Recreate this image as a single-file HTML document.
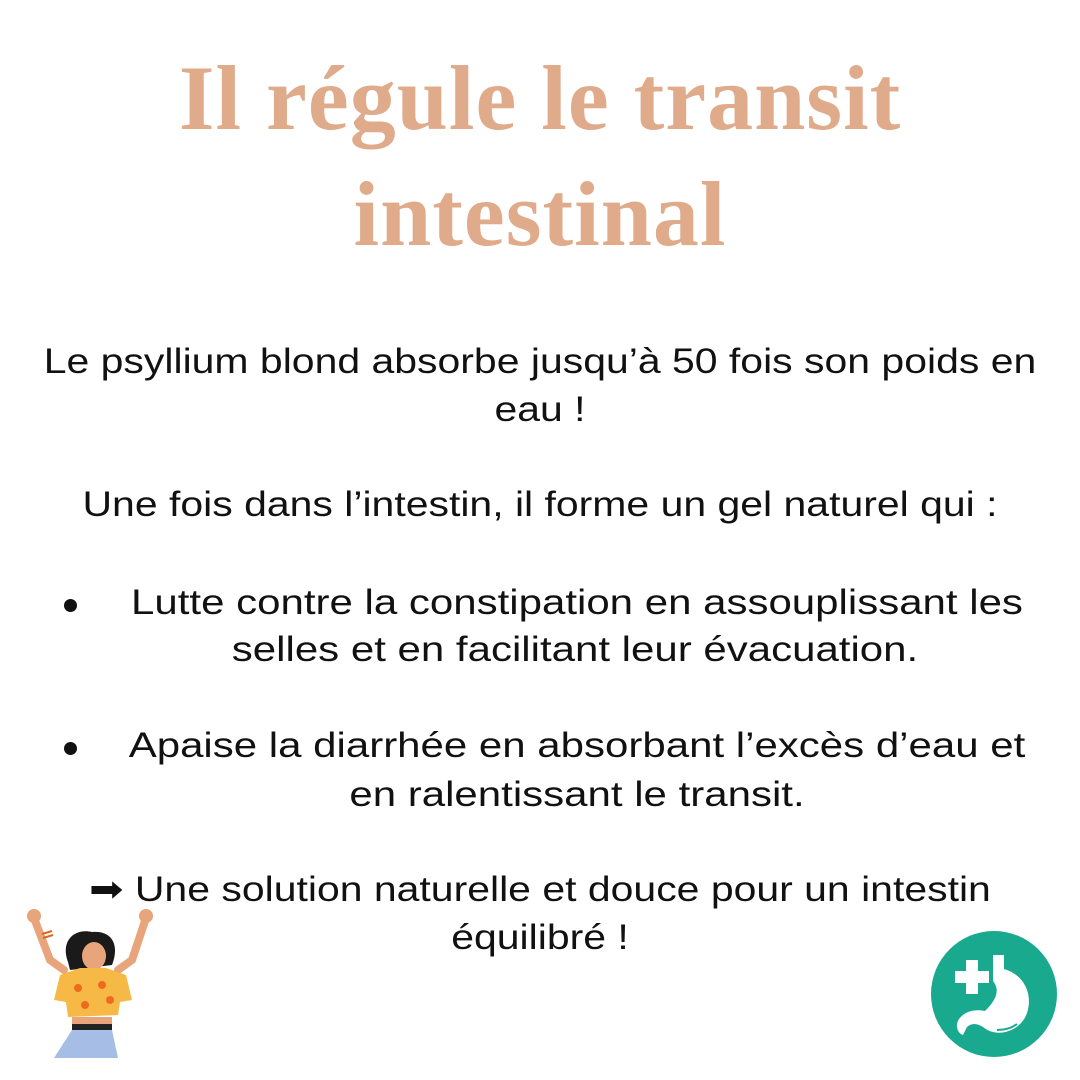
<!DOCTYPE html>
<html><head><meta charset="utf-8"><style>
html,body{margin:0;padding:0;background:#fff;}
body{width:1080px;height:1080px;position:relative;overflow:hidden;font-family:"Liberation Sans",sans-serif;color:#111;}
.t{position:absolute;left:0;width:1080px;text-align:center;font-family:"Liberation Serif",serif;font-weight:bold;color:#dfab8b;font-size:92px;line-height:1;letter-spacing:1px;}
.l{position:absolute;left:0;width:1080px;text-align:center;font-size:35px;line-height:1;white-space:nowrap;transform:scaleX(1.17);transform-origin:540px 0;}
.b{position:absolute;width:0;font-size:35px;line-height:1;white-space:nowrap;}
.b span{position:absolute;transform:translateX(-50%) scaleX(1.2);}
.dot{position:absolute;width:13px;height:13px;border-radius:50%;background:#111;}
</style></head><body>
<div class="t" style="top:52px">Il régule le transit</div>
<div class="t" style="top:168px">intestinal</div>
<div class="l" style="top:344px">Le psyllium blond absorbe jusqu’à 50 fois son poids en</div>
<div class="l" style="top:392px">eau !</div>
<div class="l" style="top:487px">Une fois dans l’intestin, il forme un gel naturel qui :</div>
<div class="dot" style="left:64px;top:599px"></div>
<div class="b" style="top:585px;left:577px;"><span>Lutte contre la constipation en assouplissant les</span></div>
<div class="b" style="top:632px;left:575px;"><span>selles et en facilitant leur évacuation.</span></div>
<div class="dot" style="left:64px;top:742px"></div>
<div class="b" style="top:728px;left:577px;"><span>Apaise la diarrhée en absorbant l’excès d’eau et</span></div>
<div class="b" style="top:777px;left:577px;"><span>en ralentissant le transit.</span></div>
<div class="l" style="top:872px">➡ Une solution naturelle et douce pour un intestin</div>
<div class="l" style="top:920px">équilibré !</div>

<svg style="position:absolute;left:20px;top:900px" width="140" height="160" viewBox="0 0 140 160">
<path d="M14 18 L30 60 L44 70" stroke="#e8a57c" stroke-width="8" fill="none" stroke-linecap="round"/>
<path d="M126 18 L112 60 L98 70" stroke="#e8a57c" stroke-width="8" fill="none" stroke-linecap="round"/>
<circle cx="14" cy="16" r="7" fill="#e8a57c"/><circle cx="126" cy="16" r="7" fill="#e8a57c"/>
<path d="M22 34 l10 -3 M23 38 l10 -3" stroke="#e0651e" stroke-width="2"/>
<path d="M48 62 C40 40 55 28 72 32 C92 30 100 45 92 65 L50 70Z" fill="#1a1a1a"/>
<ellipse cx="74" cy="56" rx="12" ry="14" fill="#e8a57c"/>
<path d="M40 75 L60 68 L86 68 L106 75 L112 100 L100 102 L98 115 L48 117 L46 102 L34 100Z" fill="#f7b945"/>
<circle cx="58" cy="88" r="4" fill="#f06a1e"/><circle cx="82" cy="85" r="4" fill="#f06a1e"/><circle cx="90" cy="100" r="4" fill="#f06a1e"/><circle cx="65" cy="105" r="4" fill="#f06a1e"/>
<rect x="52" y="117" width="40" height="8" fill="#e8a57c"/>
<rect x="52" y="124" width="40" height="6" fill="#222"/>
<path d="M52 130 L92 130 L98 158 L34 158Z" fill="#a6bde6"/>
</svg>

<svg style="position:absolute;left:929px;top:929px" width="130" height="130" viewBox="0 0 130 130">
<circle cx="65" cy="65" r="63" fill="#19a98f"/>
<path d="M26 42 h11 v-11 h12 v11 h11 v12 h-11 v11 h-12 v-11 h-11z" fill="#fff"/>
<path d="M64 26 h11 v14 C96 46 104 66 98 84 C92 102 68 110 54 98 C48 94 42 94 38 98 L34 106 C28 104 26 96 30 90 C36 82 46 80 56 82 C66 72 72 62 64 52Z" fill="#fff"/>
<path d="M68 101 Q80 101 88 95" stroke="#19a98f" stroke-width="2" fill="none"/>
</svg>
</body></html>
